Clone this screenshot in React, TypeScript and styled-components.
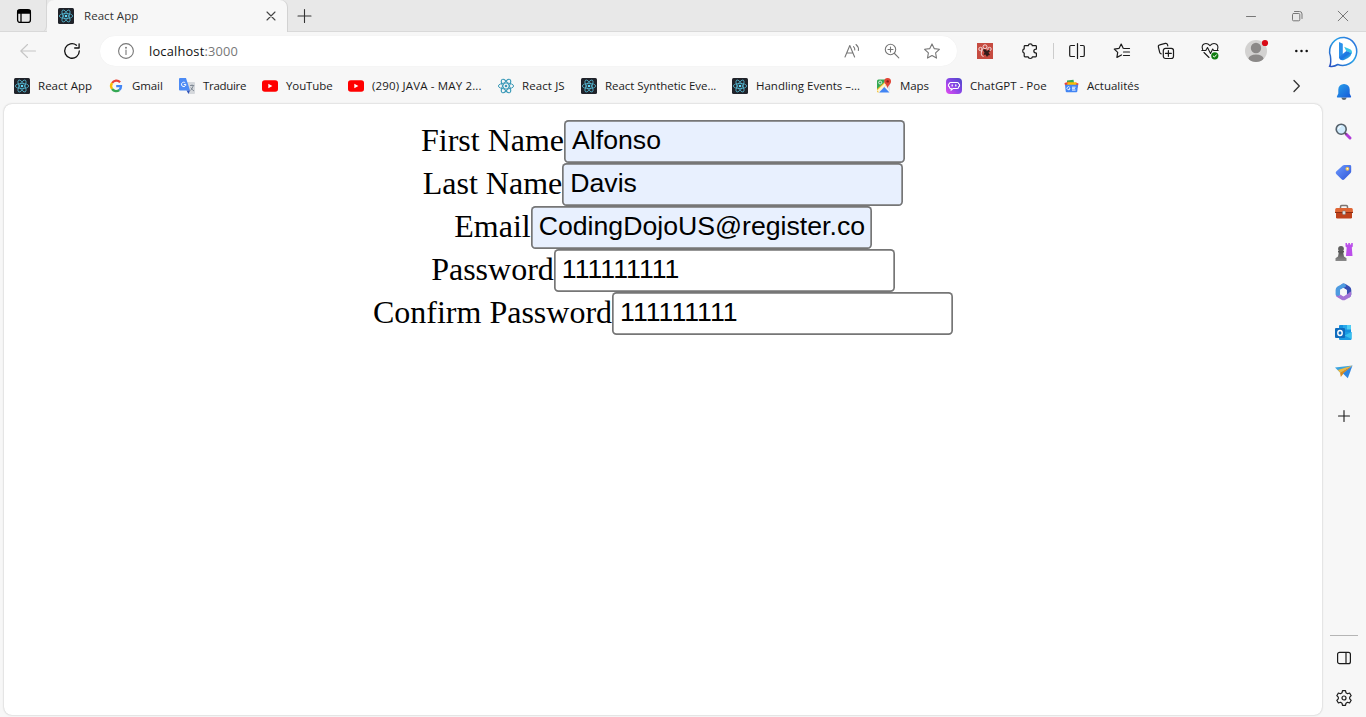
import React from 'react';
import styled, { createGlobalStyle } from 'styled-components';

const GlobalStyle = createGlobalStyle`
  * { box-sizing: border-box; }
  body { margin: 0; overflow: hidden; background: #f7f7f7; }
  svg { display: block; overflow: visible; flex: none; }
`;

const Window = styled.div`
  width: 1366px;
  height: 717px;
  display: flex;
  flex-direction: column;
  background: #f7f7f7;
  font-family: 'Open Sans', 'Noto Sans', sans-serif;
  font-size: 11.5px;
  color: #1b1b1b;
`;

const TabStrip = styled.header`
  height: 32px;
  flex: none;
  display: flex;
  background: #e8e8e8;
  box-shadow: inset 0 -1px #d9d9d9;
`;

const TabActions = styled.div`
  width: 47px;
  padding-left: 2px;
  display: flex;
  align-items: center;
  justify-content: center;
  border-right: 1px solid #d6d6d6;
  border-bottom-right-radius: 6px;
`;

const Tab = styled.div`
  width: 240px;
  display: flex;
  align-items: center;
  padding: 0 11px;
  background: #f7f7f7;
  border-radius: 7px 7px 0 0;
  box-shadow: 1px 0 #d2d2d2;
`;

const TabTitle = styled.span`
  flex: 1;
  margin-left: 10px;
  color: #333;
  line-height: 16px;
  letter-spacing: 0.05px;
`;

const NewTab = styled.div`
  width: 34px;
  display: flex;
  align-items: center;
  justify-content: center;
`;

const WindowControls = styled.div`
  margin-left: auto;
  display: flex;
`;

const WindowButton = styled.div`
  width: 46px;
  display: flex;
  align-items: center;
  justify-content: center;
`;

const Body = styled.div`
  flex: 1;
  display: flex;
  min-height: 0;
`;

const Main = styled.div`
  width: 1323px;
  flex: none;
  display: flex;
  flex-direction: column;
`;

const Toolbar = styled.div`
  height: 38px;
  flex: none;
  display: flex;
  align-items: center;
  padding-left: 6px;
`;

const IconSlot = styled.div<{ $w: number }>`
  width: ${(p) => p.$w}px;
  height: 100%;
  flex: none;
  display: flex;
  align-items: center;
  justify-content: center;
`;

const AddressBar = styled.div`
  width: 857px;
  flex: none;
  height: 30px;
  margin: 0 6px;
  display: flex;
  align-items: center;
  padding: 0 5px 0 6px;
  background: #fff;
  border-radius: 15px;
  box-shadow: 0 0 1px rgba(0, 0, 0, 0.08);
`;

const Url = styled.span`
  flex: 1;
  margin-left: 3px;
  font-size: 12.8px;
  letter-spacing: 0.2px;
  color: #111;
`;

const Port = styled.span`
  color: #777;
`;

const Divider = styled.div`
  width: 1px;
  height: 16px;
  margin-right: 1px;
  background: #ccc;
`;

const Bookmarks = styled.nav`
  height: 33px;
  flex: none;
  display: flex;
  align-items: center;
  padding-left: 14px;
`;

const Bookmark = styled.div<{ $w: number }>`
  width: ${(p) => p.$w}px;
  flex: none;
  display: flex;
  align-items: center;
  gap: 8px;
  padding-bottom: 1px;
`;

const BookmarkLabel = styled.span<{ $ls: number }>`
  white-space: nowrap;
  line-height: 16px;
  letter-spacing: ${(p) => p.$ls}px;
`;

const More = styled.div`
  margin-left: auto;
  padding: 0 22px 1px 0;
`;

const Page = styled.main`
  height: 611px;
  margin: 1px 1px 0 4px;
  padding-top: 16px;
  background: #fff;
  border-radius: 8px;
  box-shadow: 0 0 2px rgba(0, 0, 0, 0.28);
`;

const Field = styled.div`
  height: 43px;
  display: flex;
  justify-content: center;
`;

const Label = styled.label`
  font: 32px/41px 'Liberation Serif', serif;
  color: #000;
`;

const Input = styled.input<{ $filled: boolean }>`
  width: 341px;
  height: 43px;
  margin: 0;
  padding: 3px 6px 6px 8px;
  border: 0;
  box-shadow: inset 0 0 0 1.7px #767676;
  border-radius: 4.5px;
  outline: none;
  background: ${(p) => (p.$filled ? '#e8f0fe' : '#fff')};
  color: #000;
  font: 26.667px 'Liberation Sans', sans-serif;
`;

const Sidebar = styled.aside`
  width: 41px;
  display: flex;
  flex-direction: column;
  align-items: center;
`;

const SideItem = styled.div<{ $h?: number }>`
  height: ${(p) => p.$h ?? 40}px;
  flex: none;
  display: flex;
  align-items: center;
  justify-content: center;
`;

const SideRule = styled.div`
  width: 28px;
  height: 1px;
  flex: none;
  margin: auto 0 2px;
  background: #b5b5b5;
`;

const SideFooter = styled.div`
  height: 80px;
  flex: none;
  margin-bottom: -1px;
`;

type LineProps = { size?: number; color?: string; sw?: number; box?: number; children: React.ReactNode };
const Line = ({ size = 16, color = '#1b1b1b', sw = 1.1, box = 16, children }: LineProps) => (
  <svg width={size} height={size} viewBox={`0 0 ${box} ${box}`} fill="none" stroke={color} strokeWidth={sw} strokeLinecap="round" strokeLinejoin="round">
    {children}
  </svg>
);

const ReactMark = ({ dark = true }: { dark?: boolean }) => (
  <svg width="16" height="16" viewBox="0 0 16 16">
    {dark && <rect width="16" height="16" rx="1.5" fill="#20232a" />}
    <g fill="none" stroke={dark ? '#53b6d0' : '#3b9ab8'} strokeWidth={dark ? 0.8 : 1}>
      {[0, 60, 120].map((a) => (
        <ellipse key={a} cx="8" cy="8" rx={dark ? 6.7 : 7.6} ry={dark ? 2.6 : 3} transform={`rotate(${a} 8 8)`} />
      ))}
    </g>
    <circle cx="8" cy="8" r="1.3" fill={dark ? '#61dafb' : '#3b9ab8'} />
  </svg>
);

const Google = () => (
  <svg width="15" height="16" viewBox="0 0 15 16" fill="none" strokeWidth="2.3">
    <path d="M11.1 4.2A5 5 0 0 0 3.1 5" stroke="#ea4335" />
    <path d="M3.1 5A5 5 0 0 0 3.1 11" stroke="#fbbc05" />
    <path d="M3.1 11A5 5 0 0 0 10.3 12" stroke="#34a853" />
    <path d="M10.3 12A5 5 0 0 0 12 8.2H7.2" stroke="#4285f4" />
  </svg>
);

const Translate = () => (
  <svg width="16" height="16" viewBox="0 0 16 16">
    <path d="M7 4h8q1 0 1 1v10q0 1-1 1H10z" fill="#d5d8dc" />
    <path d="M11 7.500h4.200M13 6.500v1M14.200 8q-1 3-2.700 4.500M11.800 9.500q1 2 3.200 3.500" stroke="#7b8590" strokeWidth=".9" fill="none" />
    <path d="M1 0h6l4 12.500H1q-1 0-1-1V1Q0 0 1 0z" fill="#4c8bf5" />
    <path d="M7.500 12.500H11L9.500 16z" fill="#2d50b8" />
    <path d="M6.300 4.900A2.200 2.200 0 1 0 6.900 6.600H4.800" stroke="#fff" strokeWidth="1" fill="none" />
  </svg>
);

const YouTube = () => (
  <svg width="16" height="16" viewBox="0 0 16 16">
    <rect y="2.300" width="16" height="11.500" rx="2.800" fill="#f00" />
    <path d="M6.300 5.700v4.600l4.100-2.300z" fill="#fff" />
  </svg>
);

const Maps = () => (
  <svg width="16" height="16" viewBox="0 0 16 16">
    <path d="M2.500 1.500H9L8 7 1 13.500V3q0-1.500 1.500-1.500z" fill="#34a853" />
    <path d="M9.500 7.500L14 6v7.500z" fill="#dfe3e8" />
    <path d="M1 11L8.500 4l2 3L2.500 14.500Q1 14.500 1 13z" fill="#f5c02c" />
    <path d="M1 12.500L9 5l1.500 1.500L3.500 14.500z" fill="#fff" opacity=".8" />
    <path d="M3 14.500L8.300 9l5.200 5.500z" fill="#4285f4" />
    <circle cx="4.200" cy="4.500" r="1.500" fill="none" stroke="#fff" strokeWidth=".8" />
    <path d="M11.500 0A3.400 3.400 0 0 0 8.300 3.600C8.400 6 11 7 11.600 10.500 12.200 7 15 6 15 3.500A3.400 3.400 0 0 0 11.500 0z" fill="#e14435" />
    <circle cx="11.700" cy="3.400" r="1.200" fill="#891b16" />
  </svg>
);

const Poe = () => (
  <svg width="16" height="16" viewBox="0 0 16 16">
    <defs>
      <linearGradient id="poe" x1="1" y1="0" x2="0" y2="1">
        <stop stopColor="#4b47c6" /><stop offset=".5" stopColor="#8a46e8" /><stop offset="1" stopColor="#e54bef" />
      </linearGradient>
    </defs>
    <rect width="16" height="16" rx="4" fill="url(#poe)" />
    <path d="M4.500 4.500h7q1.100 0 1.100 1.200 1 .1 1 1.600t-1 1.600q0 1.600-1.200 1.600H7l-1.800 1.600v-1.600H4.500q-1.100 0-1.100-1.600-1 0-1-1.600t1-1.600q0-1.200 1.100-1.200z" fill="none" stroke="#fff" strokeWidth="1.100" />
    <path d="M6.200 6.900v1M9.800 6.900v1" stroke="#fff" strokeWidth="1.300" strokeLinecap="round" />
  </svg>
);

const News = () => (
  <svg width="15" height="16" viewBox="0 0 15 16">
    <path d="M3 2.500L9.500 1.800l.8 5H3z" fill="#34a853" />
    <path d="M.5 5l5-1.500 1 4H1zM14.500 5.500l-3-1-1 5h3.200z" fill="#ea4335" />
    <path d="M3.500 4.200h9l-.5 4h-9z" fill="#fbbc05" />
    <path d="M1 6.800h13l-.7 6.500q-.1.900-1 .9H2.700q-.9 0-1-.9z" fill="#4285f4" />
    <path d="M5.700 9.300A1.500 1.500 0 1 0 6 10.700H5M8 9.200h3.600M8 10.700h3M8 12.100h3.600" fill="none" stroke="#fff" strokeWidth=".9" />
  </svg>
);

const Bing = () => (
  <svg width="32" height="32" viewBox="0 0 32 32">
    <defs>
      <linearGradient id="bubble" x1="1" y1="0" x2="0" y2="1">
        <stop stopColor="#2d65d8" /><stop offset=".45" stopColor="#27a3e8" /><stop offset="1" stopColor="#2a4fc0" />
      </linearGradient>
      <linearGradient id="bing" x1="0" y1="0" x2="1" y2="1">
        <stop stopColor="#3193eb" /><stop offset=".5" stopColor="#1b75e2" /><stop offset="1" stopColor="#45d5df" />
      </linearGradient>
    </defs>
    <path d="M16.500 1.500A14 14 0 1 1 9.800 28.500Q6 31 1.700 30.200 3.400 27 2.400 20A14 14 0 0 1 16.500 1.500z" fill="#fff" stroke="url(#bubble)" strokeWidth="1.500" />
    <path d="M11 6l3.800 1.700v11.300l-3.800 3.200z" fill="#2b91eb" />
    <path d="M16.100 10.700l6 2.500q2.400 1.300 1.800 4.500l-5.600-2.600z" fill="#38c6e6" />
    <path d="M11 21l7.300-5.900 5.300 2.100q-.5 3-3.600 4.700l-4 2.200q-4.500 1-5-3.100z" fill="url(#bing)" />
  </svg>
);

const Bell = () => (
  <svg width="16" height="18" viewBox="0 0 16 18">
    <defs><linearGradient id="bell" x1="0" y1="0" x2="1" y2="1"><stop stopColor="#29a1eb" /><stop offset="1" stopColor="#1659d8" /></linearGradient></defs>
    <path d="M5.200 14.500h5.600Q10 17 8 17t-2.800-2.500z" fill="#5c6670" />
    <path d="M8 1a5.600 5.600 0 0 1 5.700 5.600v4l1.400 2.800q.3 1.100-.7 1.100H1.600q-1 0-.7-1.100l1.400-2.800v-4A5.600 5.600 0 0 1 8 1z" fill="url(#bell)" />
  </svg>
);

const Magnifier = () => (
  <svg width="17" height="18" viewBox="0 0 17 18">
    <path d="M11 11l4 4" stroke="#b13bd8" strokeWidth="3" strokeLinecap="round" />
    <path d="M9.500 9.500l2 2" stroke="#555" strokeWidth="1.500" />
    <circle cx="6.200" cy="6.200" r="5" fill="#cfeafb" stroke="#56616b" strokeWidth="1.600" />
    <path d="M3.400 6a3 3 0 0 1 2.700-2.700" stroke="#fff" fill="none" />
  </svg>
);

const Tag = () => (
  <svg width="17" height="17" viewBox="0 0 17 17">
    <defs><linearGradient id="tag" x1="0" y1="0" x2="1" y2="1"><stop stopColor="#6d9bff" /><stop offset="1" stopColor="#3156d8" /></linearGradient></defs>
    <path d="M9.300 1h5.600q1.300.1 1.300 1.300v5.300q0 .8-.6 1.400l-6.200 6.200q-1.400 1.400-2.800 0L1.200 10q-1.100-1.200 0-2.500l6.600-5.900Q8.400 1 9.300 1z" fill="url(#tag)" />
    <circle cx="12.400" cy="4.800" r="1.900" fill="#f7c64b" /><circle cx="12.400" cy="4.800" r=".8" fill="#fff" />
  </svg>
);

const Toolbox = () => (
  <svg width="18" height="16" viewBox="0 0 18 16">
    <path d="M5.500 4.500V2.700q0-1.200 1.200-1.200h4.600q1.200 0 1.200 1.200v1.800" fill="none" stroke="#7d7470" strokeWidth="1.500" />
    <rect x="1" y="8" width="16" height="6.500" rx="1.300" fill="#bf421b" />
    <path d="M1.800 4h14.400q1.300 0 1.500 1.300L18 8.500H0l.3-3.200Q.5 4 1.800 4z" fill="#df6534" />
    <path d="M0 8.500h18" stroke="#8c2d12" />
    <rect x="7.500" y="7" width="3" height="3.500" rx=".7" fill="#ddd" stroke="#777" strokeWidth=".5" />
  </svg>
);

const Chess = () => (
  <svg width="18" height="18" viewBox="0 0 18 18">
    <defs><linearGradient id="pawn" x1="0" y1="0" x2="0" y2="1"><stop stopColor="#505050" /><stop offset="1" stopColor="#8a8a8a" /></linearGradient></defs>
    <path d="M10.500 0h1.500v1.500H13.300V0h1.600v1.500h1.300V0H17.800v3.500l-1 1 .7 8.500h-6.500l.7-8.500-1.200-1z" fill="#bb4eea" />
    <path d="M3 8h6v1.500H8.200l.8 4 2.500 1.700V18H.5v-2.800L3 13.500l.8-4H3z" fill="url(#pawn)" />
    <circle cx="6" cy="5.800" r="2.900" fill="#5f5f5f" />
  </svg>
);

const M365 = () => (
  <svg width="17" height="18" viewBox="0 0 17 18">
    <path d="M6.500 1.200Q8.500-.1 10.500 1l4 2.400Q16.300 4.500 16.300 7v4.500Q16 13.500 14.500 14.500L11.800 12V7L7 4.200z" fill="#374eb2" />
    <path d="M10.500 1L8 .4 2.500 3.400Q.6 4.500.6 7v4.500Q1 14 3.500 13.700 5.200 13 5.200 11V6.800L11 3.500z" fill="#4e9be0" />
    <path d="M.8 12q.3 1.800 2 2.600l3.700 2.200q2 1.100 4 0l4-2.400q1.800-1.100 1.800-3.500 0-1.500-1-2.400Q14 10 12.500 11L8.500 13.500 5.200 11.500Q4 14.300.8 12z" fill="#a572d6" />
    <path d="M5.200 6.800L8.500 4.900l3.300 2.100v4L8.500 13l-3.300-1.900z" fill="#f7f7f7" />
  </svg>
);

const Outlook = () => (
  <svg width="17" height="17" viewBox="0 0 17 17">
    <rect x="4" y="1" width="12" height="9" rx="1" fill="#1490df" />
    <path d="M8 1h4v4.500H8z" fill="#28a8ea" /><path d="M12 1h3q1 0 1 1v3.500h-4z" fill="#50d0f5" />
    <path d="M4 8h12.500v7q0 1-1 1H5q-1 0-1-1z" fill="#1a9be3" />
    <path d="M16.500 8v7l-7-3.500z" fill="#36c0ef" />
    <rect x="0" y="4" width="10" height="10" rx="1" fill="#0f6cbd" />
    <ellipse cx="5" cy="9" rx="2.200" ry="2.500" fill="none" stroke="#fff" strokeWidth="1.400" />
  </svg>
);

const Plane = () => (
  <svg width="18" height="16" viewBox="0 0 18 16">
    <path d="M0 3.500L17.500 1.500 5 8.500z" fill="#3ba4df" />
    <path d="M17.500 1.500L5 8.500l.8 4.500 2.400-3z" fill="#d78b20" />
    <path d="M2.800 6L17.500 1.500 5 8.500z" fill="#f2ba3d" />
    <path d="M17.500 1.500L8 9.500l4.800 4.700z" fill="#2f86e0" />
  </svg>
);

const CatExt = () => (
  <svg width="16" height="16" viewBox="0 0 16 16">
    <rect width="16" height="16" fill="#c64b40" />
    <g fill="none" stroke="#f5dada" strokeWidth="1">
      <circle cx="3.500" cy="6" r="1.700" /><circle cx="8" cy="3.800" r="2" /><circle cx="12.500" cy="6" r="1.700" />
      <path d="M4.500 8q-1 5 2 5.500M5 5.500v3" />
    </g>
    <path d="M6 7l2-1 2 2 2-1.500 1 2-1.500 1L13 12l-2 .5L10 14l-1.500-2.500L6.500 12l1-2.500z" fill="#321b1a" />
  </svg>
);

const Avatar = () => (
  <svg width="22" height="22" viewBox="0 0 22 22">
    <defs><clipPath id="face"><circle cx="11" cy="11" r="11" /></clipPath></defs>
    <circle cx="11" cy="11" r="11" fill="#d3d2d1" />
    <g fill="#8b8988" clipPath="url(#face)"><circle cx="11" cy="8" r="5.200" /><ellipse cx="11" cy="18.500" rx="7.500" ry="4" /></g>
    <circle cx="20" cy="3" r="3.100" fill="#d90a16" />
  </svg>
);

const Health = () => (
  <Line size={18} box={18}>
    <path d="M1.700 7.500Q.2 3.500 3 2q3.200-1.400 6 1.700Q11.800.6 15 2q2.800 1.500 1.500 5.500M3 10.500l5 5" />
    <path d="M.8 8.500h4L6.500 5.500l3 6L11.700 7l1 1.500h4.500" />
    <circle cx="13.800" cy="13.800" r="3.600" fill="#107c10" stroke="none" />
    <path d="M12.200 14l1.200 1.100 2-2.300" stroke="#fff" strokeWidth="1" />
  </Line>
);

const bookmarks: { label: string; icon: React.ReactNode; w: number; ls?: number }[] = [
  { label: 'React App', icon: <ReactMark />, w: 95, ls: 0.03 },
  { label: 'Gmail', icon: <Google />, w: 70 },
  { label: 'Traduire', icon: <Translate />, w: 83, ls: -0.3 },
  { label: 'YouTube', icon: <YouTube />, w: 86 },
  { label: '(290) JAVA - MAY 2...', icon: <YouTube />, w: 150, ls: 0.16 },
  { label: 'React JS', icon: <ReactMark dark={false} />, w: 83, ls: 0.1 },
  { label: 'React Synthetic Eve...', icon: <ReactMark />, w: 151, ls: -0.05 },
  { label: 'Handling Events –...', icon: <ReactMark />, w: 144, ls: 0 },
  { label: 'Maps', icon: <Maps />, w: 70 },
  { label: 'ChatGPT - Poe', icon: <Poe />, w: 118, ls: 0.03 },
  { label: 'Actualités', icon: <News />, w: 90, ls: 0 },
];

const fields = [
  { label: 'First Name', value: 'Alfonso', filled: true },
  { label: 'Last Name', value: 'Davis', filled: true },
  { label: 'Email', value: 'CodingDojoUS@register.co', filled: true },
  { label: 'Password', value: '111111111', filled: false },
  { label: 'Confirm Password', value: '111111111', filled: false },
];

export default function App() {
  return (
    <Window>
      <GlobalStyle />
      <TabStrip>
        <TabActions>
          <Line color="#000" sw={1.3}>
            <rect x="1.600" y="1.600" width="12.800" height="12.800" rx="2.500" />
            <path d="M2 2.500h12V5H2z" fill="#000" /><path d="M5 5v9" />
          </Line>
        </TabActions>
        <Tab>
          <ReactMark />
          <TabTitle>React App</TabTitle>
          <Line size={10} box={10} color="#444" sw={1.1}><path d="M1 1l8 8M9 1L1 9" /></Line>
        </Tab>
        <NewTab><Line color="#333"><path d="M8.500 1.500v13M2 8h13" /></Line></NewTab>
        <WindowControls>
          <WindowButton><Line size={10} box={10} color="#777" sw={1}><path d="M.5 5.500h9" /></Line></WindowButton>
          <WindowButton>
            <Line size={10} box={10} color="#777" sw={1}>
              <rect x=".5" y="2.500" width="7.300" height="7.300" rx="1" /><path d="M2.500.5h5q2.500 0 2.500 2.500v4.500" />
            </Line>
          </WindowButton>
          <WindowButton><Line size={10} box={10} color="#777" sw={1}><path d="M.2.200l9.600 9.600M9.800.2L.2 9.800" /></Line></WindowButton>
        </WindowControls>
      </TabStrip>
      <Body>
        <Main>
          <Toolbar>
            <IconSlot $w={44}><Line color="#c6c6c6"><path d="M15.500 8H.8M7.500 1.500L.8 8l6.700 6.500" /></Line></IconSlot>
            <IconSlot $w={44}><Line color="#111" sw={1.300}><path d="M15.300 8A7.300 7.300 0 1 1 12.500 2.200M15.100 .8V5H10.700" /></Line></IconSlot>
            <AddressBar>
              <IconSlot $w={40}><Line color="#777" sw={1.100}><circle cx="8" cy="8" r="7.400" /><path d="M8 7v4.500" /><circle cx="8" cy="4.700" r=".4" fill="#777" /></Line></IconSlot>
              <Url>localhost<Port>:3000</Port></Url>
              <IconSlot $w={40}><Line color="#777"><path d="M1 14L5.800 2.500 10.600 14M2.700 10h6.200M9.500 3.600q1.500 1.400 1.300 3.400M12 1.500q3 2.500 2.400 6" /></Line></IconSlot>
              <IconSlot $w={40}><Line color="#777"><circle cx="6.500" cy="6.500" r="5.200" /><path d="M10.500 10.500l4.300 4.300M4 6.500h5M6.500 4v5" /></Line></IconSlot>
              <IconSlot $w={40}><Line color="#777"><path d="M8 .9l2.200 4.700 5.200.7-3.800 3.600.9 5.200L8 12.600l-4.500 2.500.9-5.200L.6 6.300l5.200-.7z" /></Line></IconSlot>
            </AddressBar>
            <IconSlot $w={44}><CatExt /></IconSlot>
            <IconSlot $w={46}>
              <Line sw={1.200}><path d="M3 2.600h3.300Q6.500.8 8.300.8t2 1.800h3.300q.8 0 .8.800v2.700q-2.600 0-2.600 2t2.600 2v3q0 .8-.8.800h-3.200q-.1 1.600-2.100 1.600t-2.100-1.600H3q-.8 0-.8-.8v-3Q.7 9.800.7 8t1.500-2.100V3.400q0-.8.8-.8z" /></Line>
            </IconSlot>
            <Divider />
            <IconSlot $w={44}><Line sw={1.200}><path d="M8.500 .5v15M5.500 2.500H2Q.7 2.500.7 3.800v8.400Q.7 13.500 2 13.500h3.500M11.500 2.500H14q1.300 0 1.300 1.300v8.400q0 1.300-1.300 1.300h-2.500" /></Line></IconSlot>
            <IconSlot $w={46}><Line sw={1.200}><path d="M9.200 5.200L7.200 1 5 5.400.3 6.100l3.400 3.300-.8 5L7.500 12M10 5.500h5.500M9.500 9h6M9.500 12.500h6" /></Line></IconSlot>
            <IconSlot $w={42}>
              <Line sw={1.200}><rect x="5.300" y="5.300" width="10.200" height="10.200" rx="2.200" /><path d="M10.400 7.500v5.800M7.500 10.400h5.800M3.200 10.800Q2 10.500 1.700 9.300L.4 4q-.4-1.700 1.300-2.100L7.300.4Q9 0 9.500 1.700l.3 1.200" /></Line>
            </IconSlot>
            <IconSlot $w={46}><Health /></IconSlot>
            <IconSlot $w={46}><Avatar /></IconSlot>
            <IconSlot $w={44}><svg width="16" height="16" viewBox="0 0 16 16" fill="#111"><circle cx="3.300" cy="8" r="1.250" /><circle cx="8.500" cy="8" r="1.250" /><circle cx="13.700" cy="8" r="1.250" /></svg></IconSlot>
          </Toolbar>
          <Bookmarks>
            {bookmarks.map((b) => (
              <Bookmark key={b.label} $w={b.w}>
                {b.icon}
                <BookmarkLabel $ls={b.ls ?? -0.1}>{b.label}</BookmarkLabel>
              </Bookmark>
            ))}
            <More><Line size={10} box={10} color="#333" sw={1.300}><path d="M3-.5L8.300 5 3 10.500" /></Line></More>
          </Bookmarks>
          <Page>
            {fields.map((f) => (
              <Field key={f.label}>
                <Label>{f.label}</Label>
                <Input $filled={f.filled} defaultValue={f.value} spellCheck={false} />
              </Field>
            ))}
          </Page>
        </Main>
        <Sidebar>
          <SideItem><Bing /></SideItem>
          <SideItem><Bell /></SideItem>
          <SideItem><Magnifier /></SideItem>
          <SideItem><Tag /></SideItem>
          <SideItem><Toolbox /></SideItem>
          <SideItem><Chess /></SideItem>
          <SideItem><M365 /></SideItem>
          <SideItem><Outlook /></SideItem>
          <SideItem><Plane /></SideItem>
          <SideItem $h={47}><Line size={12} box={12}><path d="M6 .5v11M.5 6h11" /></Line></SideItem>
          <SideRule />
          <SideFooter>
            <SideItem><Line size={14} box={14} sw={1.200}><rect x=".6" y="1.300" width="12.800" height="11.400" rx="2" /><path d="M9 1.500v11" /></Line></SideItem>
            <SideItem>
              <Line sw={1.200}>
                <path d="M6.500.7h3l.5 2.100 1.500.9 2.100-.7 1.600 2.700L13.700 7.200v1.600l1.500 1.500-1.600 2.700-2.100-.7-1.500.9-.5 2.100h-3L6 13.200l-1.500-.9-2.100.7L.8 10.300l1.500-1.500V7.200L.8 5.700 2.400 3l2.100.7L6 2.800z" />
                <circle cx="8" cy="8" r="2" />
              </Line>
            </SideItem>
          </SideFooter>
        </Sidebar>
      </Body>
    </Window>
  );
}
